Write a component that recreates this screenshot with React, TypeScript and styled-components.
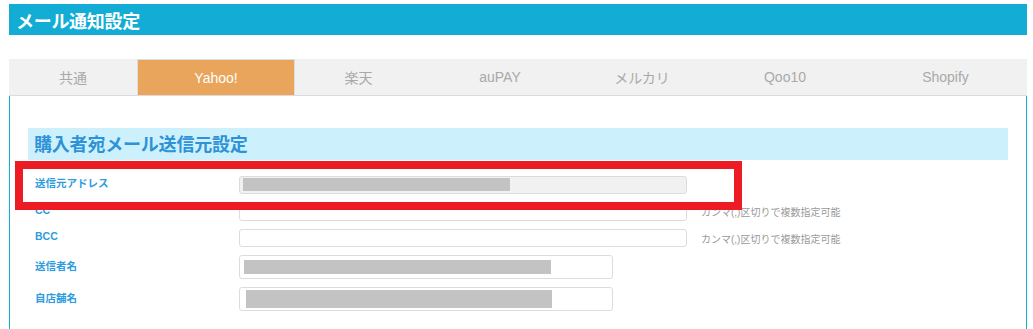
import React from "react";
import styled, { createGlobalStyle } from "styled-components";

const Global = createGlobalStyle`
  html, body { margin: 0; padding: 0; background: #fff; }
  body { font-family: "Liberation Sans", "Noto Sans CJK JP", Arial, sans-serif; }
`;

const Page = styled.div`
  padding: 4px 6px 0 9px;
`;

const TitleBar = styled.div`
  height: 31px;
  background: #12acd5;
  display: flex;
  align-items: center;
  padding-left: 7px;
  color: #fff;
  font-size: 18px;
  font-weight: bold;
  font-family: "Noto Sans CJK JP", sans-serif;
  letter-spacing: -0.3px;
`;

const TabBar = styled.div`
  margin-top: 24px;
  display: grid;
  grid-template-columns: 128px 158px 127px 156px 128px 158px 1fr;
  height: 37px;
  background: #f1f1f1;
  border-bottom: 1px solid #dcdcdc;
  box-sizing: border-box;
`;

const Tab = styled.div<{ $active?: boolean }>`
  display: flex;
  align-items: center;
  justify-content: center;
  font-size: 14px;
  font-family: "Liberation Sans", "Noto Sans CJK JP", sans-serif;
  color: ${(p) => (p.$active ? "#fff" : "#a9a9a9")};
  background: ${(p) => (p.$active ? "#e9a55b" : "transparent")};
  border: ${(p) => (p.$active ? "1px solid #dedede" : "none")};
  border-bottom: none;
  box-sizing: border-box;
`;

const Panel = styled.div`
  position: relative;
  border-left: 1px solid #12acd5;
  border-right: 1px solid #12acd5;
  padding: 32px 18px 20px 18px;
`;

const SectionHeading = styled.div`
  height: 32px;
  background: #cdf1fc;
  display: flex;
  align-items: center;
  padding: 0 0 3px 6px;
  box-sizing: border-box;
  color: #2e92d8;
  font-size: 18px;
  font-weight: bold;
  font-family: "Noto Sans CJK JP", sans-serif;
  letter-spacing: -0.2px;
`;

const Form = styled.div`
  padding-top: 15px;
  display: flex;
  flex-direction: column;
  gap: 8px;
`;

const Row = styled.div`
  display: grid;
  grid-template-columns: 211px auto auto;
  align-items: center;
  justify-content: start;
`;

const Label = styled.div`
  padding-left: 7px;
  padding-bottom: 4px;
  color: #2f9ce0;
  font-size: 10.5px;
  font-weight: bold;
  font-family: "Liberation Sans", "Noto Sans CJK JP", sans-serif;
`;

const Field = styled.div<{ $w: number; $h: number; $disabled?: boolean }>`
  width: ${(p) => p.$w}px;
  height: ${(p) => p.$h}px;
  box-sizing: border-box;
  border: 1px solid #dcdcdc;
  border-radius: 3px;
  background: ${(p) => (p.$disabled ? "#f1f1f1" : "#fff")};
  display: flex;
  align-items: center;
`;

const Redaction = styled.div<{ $w: number; $h: number; $left: number }>`
  width: ${(p) => p.$w}px;
  height: ${(p) => p.$h}px;
  margin-left: ${(p) => p.$left}px;
  background: #c3c3c3;
`;

const Help = styled.div`
  margin-left: 14px;
  color: #9a9a9a;
  font-size: 10px;
  font-family: "Liberation Sans", "Noto Sans CJK JP", sans-serif;
`;

const Highlight = styled.div`
  position: absolute;
  left: 5px;
  top: 65px;
  width: 727px;
  height: 49px;
  box-sizing: border-box;
  border: 8px solid #ed1c24;
  pointer-events: none;
`;

const tabs = ["共通", "Yahoo!", "楽天", "auPAY", "メルカリ", "Qoo10", "Shopify"];

export default function App() {
  return (
    <>
      <Global />
      <Page>
        <TitleBar>メール通知設定</TitleBar>
        <TabBar>
          {tabs.map((t) => (
            <Tab key={t} $active={t === "Yahoo!"}>
              {t}
            </Tab>
          ))}
        </TabBar>
        <Panel>
          <SectionHeading>購入者宛メール送信元設定</SectionHeading>
          <Form>
            <Row>
              <Label>送信元アドレス</Label>
              <Field $w={448} $h={18} $disabled>
                <Redaction $w={267} $h={13} $left={3} />
              </Field>
            </Row>
            <Row>
              <Label>CC</Label>
              <Field $w={448} $h={19} />
              <Help>カンマ(,)区切りで複数指定可能</Help>
            </Row>
            <Row>
              <Label>BCC</Label>
              <Field $w={448} $h={18} />
              <Help>カンマ(,)区切りで複数指定可能</Help>
            </Row>
            <Row>
              <Label>送信者名</Label>
              <Field $w={374} $h={24}>
                <Redaction $w={307} $h={14} $left={4} />
              </Field>
            </Row>
            <Row>
              <Label>自店舗名</Label>
              <Field $w={374} $h={24}>
                <Redaction $w={306} $h={18} $left={6} />
              </Field>
            </Row>
          </Form>
          <Highlight />
        </Panel>
      </Page>
    </>
  );
}
